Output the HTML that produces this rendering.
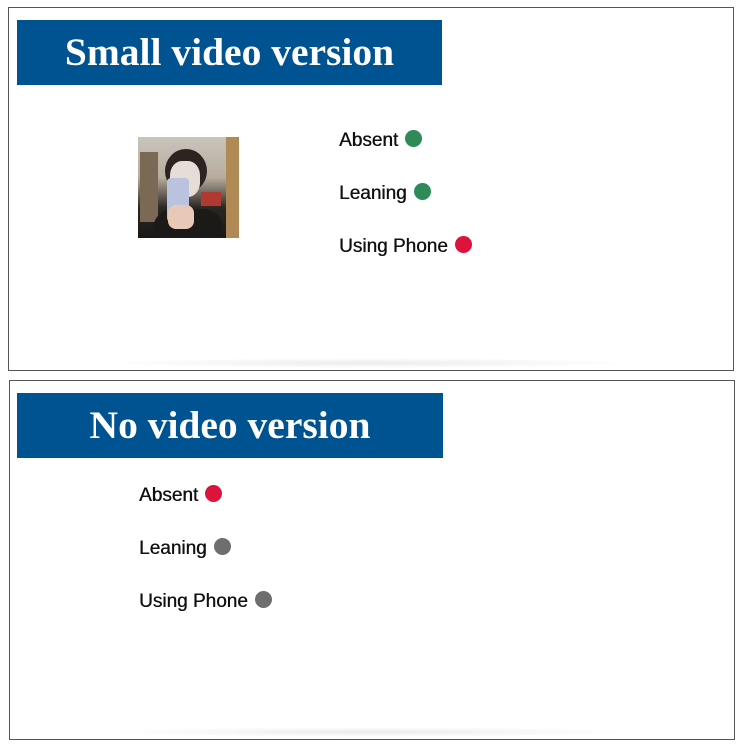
<!DOCTYPE html>
<html><head><style>
body{margin:0;width:746px;height:746px;background:#fff;position:relative;overflow:hidden;font-family:"Liberation Sans",sans-serif}
.box{position:absolute;border:1px solid #555;background:#fff}
.shadow{position:absolute;height:10px;background:radial-gradient(ellipse at center,rgba(0,0,0,.08),rgba(0,0,0,0) 70%)}
.ban{position:absolute;background:#005391;color:#fff;font-family:"Liberation Serif",serif;font-weight:bold;font-size:39.5px;text-align:center;line-height:65px}
.lab{position:absolute;font-size:19px;color:#111;line-height:20px;white-space:nowrap;text-shadow:0.4px 0 0 #111}
.dot{display:inline-block;width:17px;height:17px;border-radius:50%;vertical-align:-1px;margin-left:7px}
.g{background:#2e8b57}.r{background:#dc143c}.k{background:#6e6e6e}
</style></head><body>
<div class="box" style="left:8px;top:7px;width:724px;height:362px"></div>
<div class="shadow" style="left:100px;top:358px;width:540px"></div>
<div class="ban" style="left:17px;top:20px;width:425px;height:65px">Small video version</div>
<div style="position:absolute;left:138px;top:137px;width:101px;height:101px;background:linear-gradient(180deg,#c9c4bd 0%,#b8ad9e 40%,#2a2622 70%,#1a1816 100%);overflow:hidden">
 <div style="position:absolute;left:2px;top:15px;width:18px;height:70px;background:#7a6a55"></div>
 <div style="position:absolute;left:88px;top:0;width:13px;height:101px;background:#b08a55"></div>
 <div style="position:absolute;left:27px;top:12px;width:42px;height:44px;border-radius:50%;background:#2b2420"></div>
 <div style="position:absolute;left:32px;top:24px;width:30px;height:36px;border-radius:40%;background:#e6ddd6"></div>
 <div style="position:absolute;left:15px;top:72px;width:70px;height:29px;background:#1c1a18;border-radius:20px 20px 0 0"></div>
 <div style="position:absolute;left:29px;top:41px;width:22px;height:44px;border-radius:4px;background:#b9c3dd"></div>
 <div style="position:absolute;left:63px;top:55px;width:20px;height:14px;background:#b03a30"></div>
 <div style="position:absolute;left:30px;top:68px;width:26px;height:24px;border-radius:8px;background:#e8c8b6"></div>
</div>
<div class="lab" style="left:339px;top:130px">Absent<span class="dot g"></span></div>
<div class="lab" style="left:339px;top:183px">Leaning<span class="dot g"></span></div>
<div class="lab" style="left:339px;top:236px">Using Phone<span class="dot r"></span></div>

<div class="box" style="left:9px;top:380px;width:724px;height:358px"></div>
<div class="shadow" style="left:100px;top:727px;width:540px"></div>
<div class="ban" style="left:17px;top:393px;width:426px;height:65px">No video version</div>
<div class="lab" style="left:139px;top:485px">Absent<span class="dot r"></span></div>
<div class="lab" style="left:139px;top:538px">Leaning<span class="dot k"></span></div>
<div class="lab" style="left:139px;top:591px">Using Phone<span class="dot k"></span></div>
</body></html>
